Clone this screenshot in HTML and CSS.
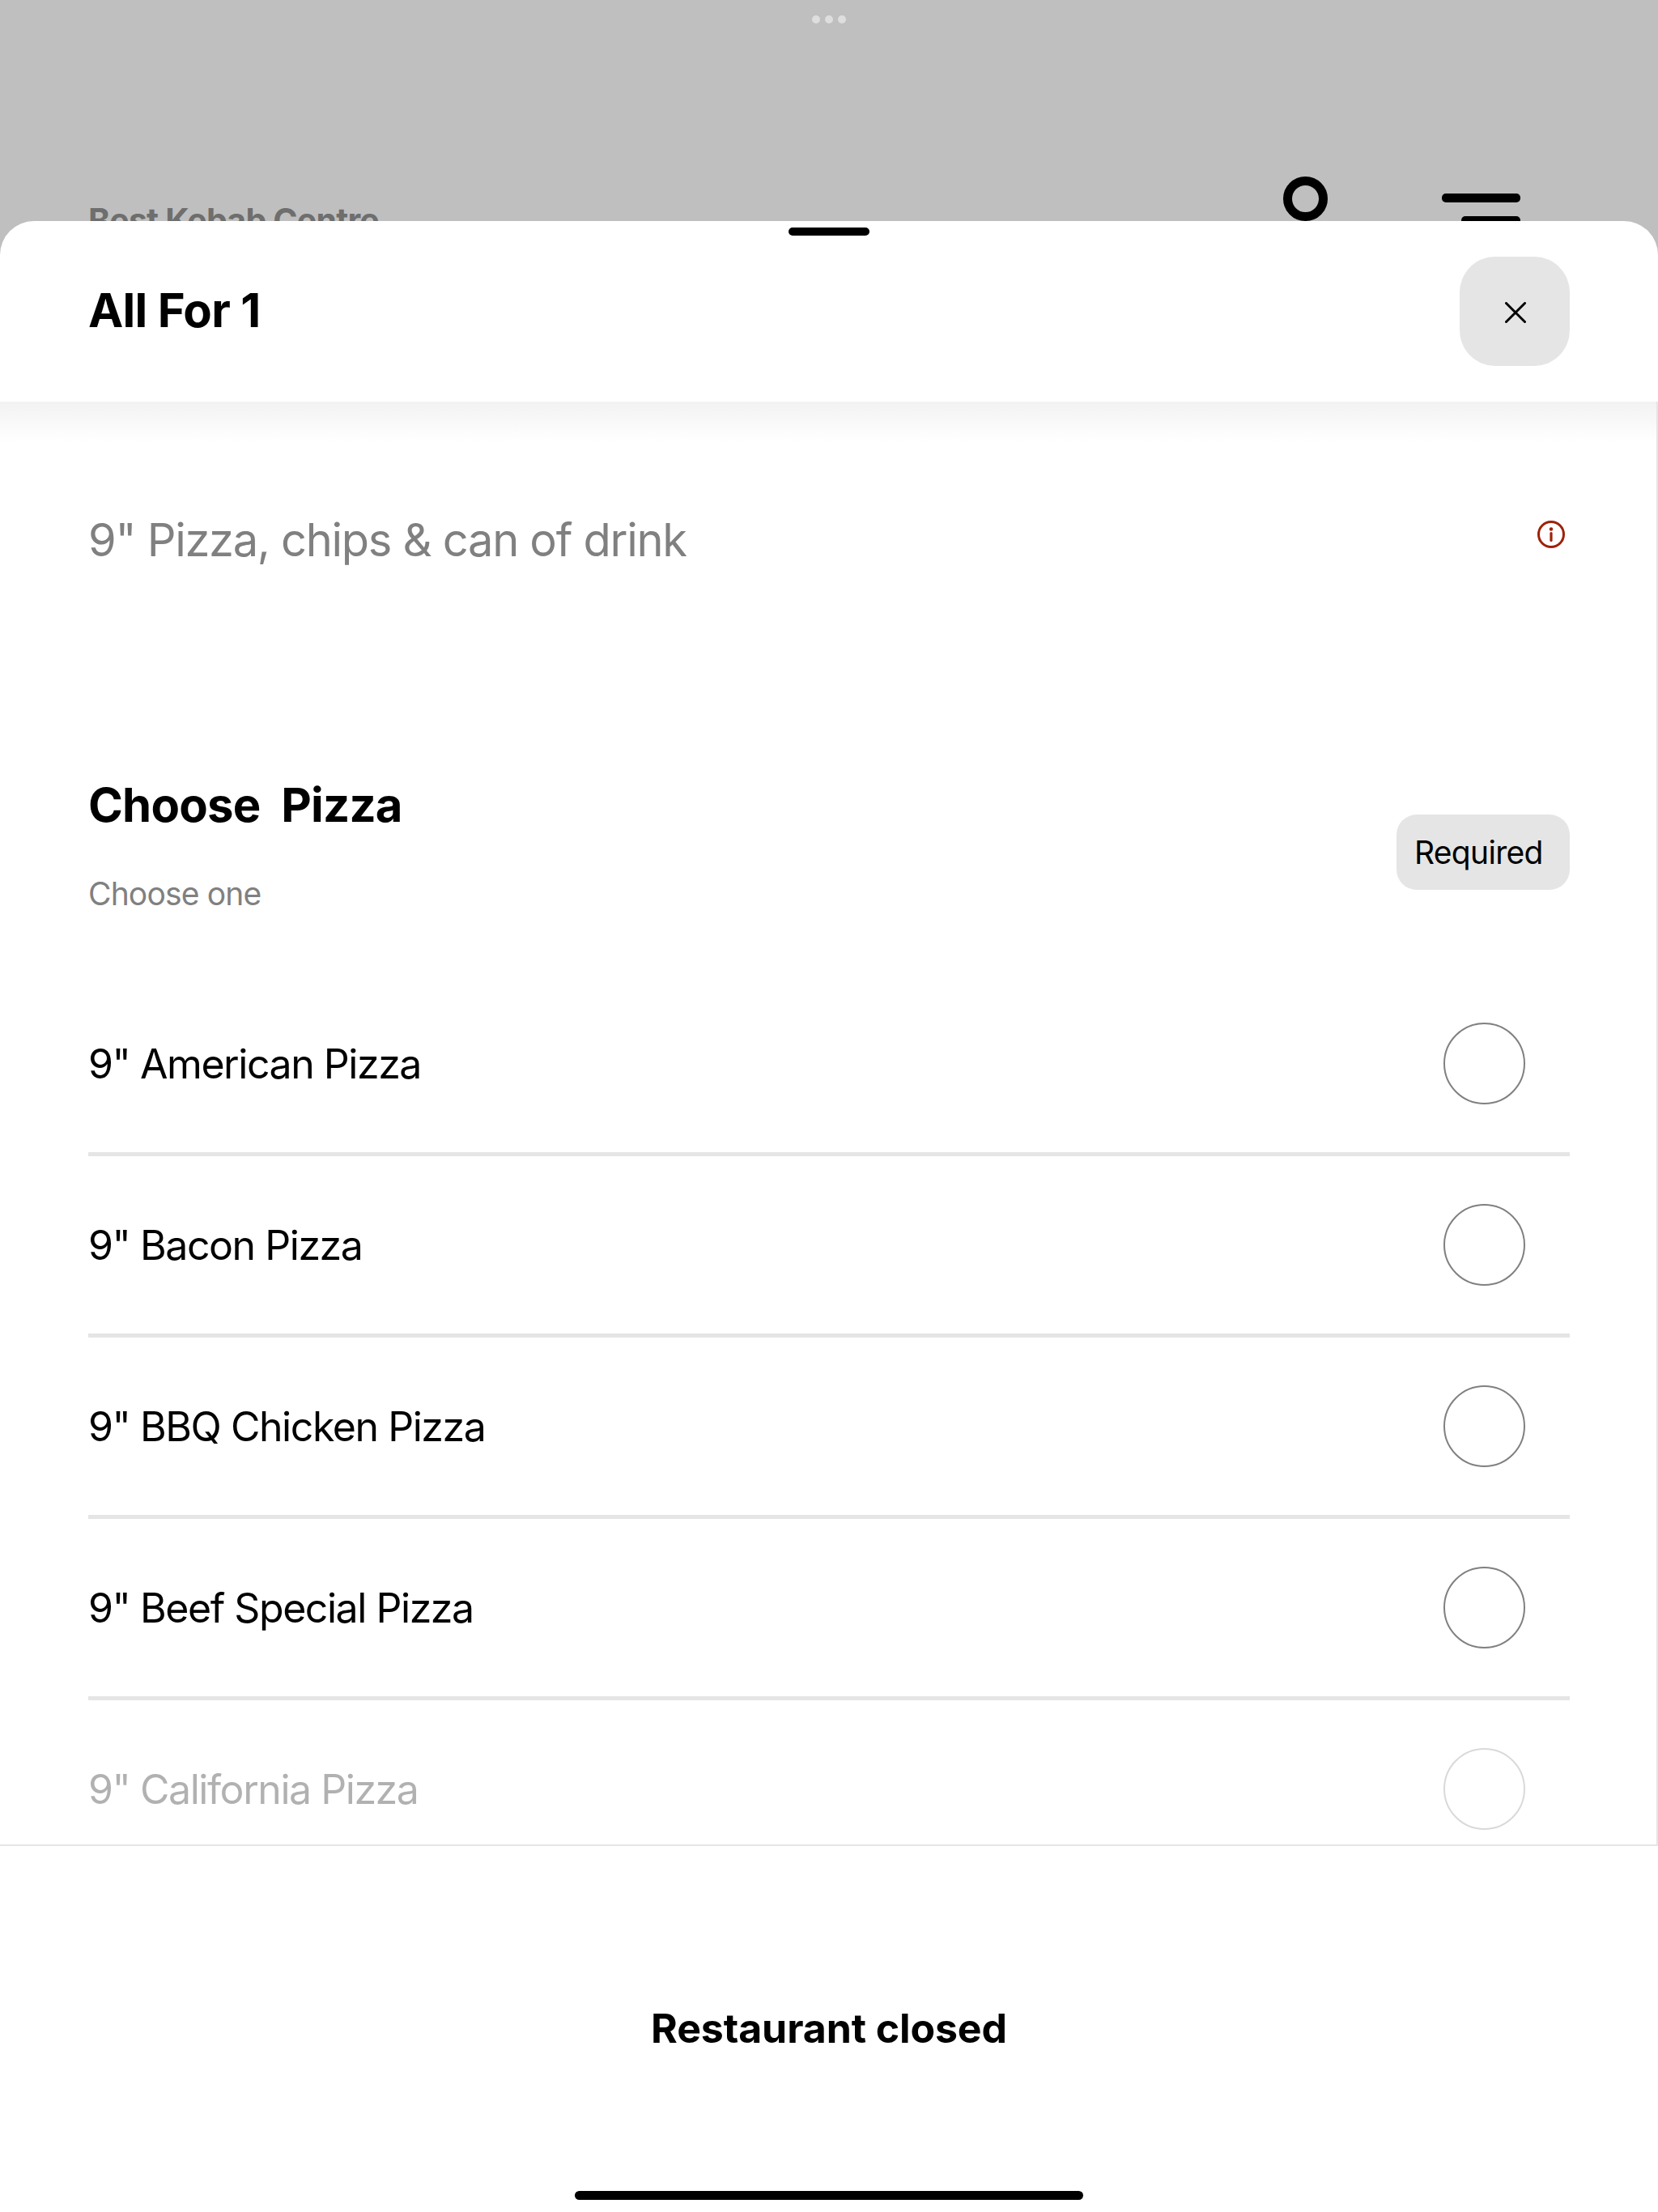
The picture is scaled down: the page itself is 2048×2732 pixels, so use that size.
FILE: index.html
```html
<!DOCTYPE html>
<html lang="en">
<head>
    <meta charset="UTF-8">
    <meta name="viewport" content="width=device-width, initial-scale=1.0">
    <title>All For 1</title>
    <link rel="stylesheet" href="styles.css">
</head>
<body>
    <!-- Page behind the sheet -->
    <div class="backdrop">
        <div class="top-dots"><span></span><span></span><span></span></div>
        <div class="restaurant-bar">
            <div class="restaurant-name">Best Kebab Centre</div>
            <div class="search-icon"></div>
            <div class="menu-icon"><span class="bar-long"></span><span class="bar-short"></span></div>
        </div>
    </div>

    <div class="sheet">
        <div class="handle"></div>
        <div class="sheet-header">
            <h1>All For 1</h1>
            <button class="close-btn" aria-label="Close">
                <svg width="26" height="26" viewBox="0 0 26 26">
                    <path d="M1.5 1.5L24.5 24.5M24.5 1.5L1.5 24.5" stroke="#000" stroke-width="3" stroke-linecap="round"/>
                </svg>
            </button>
        </div>

        <div class="sheet-body">
            <div class="header-shade"></div>

            <div class="description">
                <p>9" Pizza, chips &amp; can of drink</p>
                <svg class="info-icon" width="34" height="34" viewBox="0 0 34 34">
                    <circle cx="17" cy="17" r="15.5" fill="none" stroke="#9e2109" stroke-width="3"/>
                    <circle cx="17" cy="10.5" r="2.2" fill="#9e2109"/>
                    <path d="M17 15.5V24.5" stroke="#9e2109" stroke-width="3.2" stroke-linecap="round"/>
                </svg>
            </div>

            <div class="group-head">
                <div>
                    <h2>Choose&nbsp; Pizza</h2>
                    <div class="group-hint">Choose one</div>
                </div>
                <div class="badge">Required</div>
            </div>

            <div class="option"><span>9" American Pizza</span><i class="radio"></i></div>
            <div class="option"><span>9" Bacon Pizza</span><i class="radio"></i></div>
            <div class="option"><span>9" BBQ Chicken Pizza</span><i class="radio"></i></div>
            <div class="option"><span>9" Beef Special Pizza</span><i class="radio"></i></div>
            <div class="option faded"><span>9" California Pizza</span><i class="radio"></i></div>
        </div>

        <div class="sheet-footer">
            <div class="closed-label">Restaurant closed</div>
            <div class="home-bar"></div>
        </div>
    </div>
</body>
</html>
```

FILE: styles.css
```css
/* Sheet over a dimmed page */

* {
    box-sizing: border-box;
}

body {
    margin: 0;
    height: 2732px;
    overflow: hidden;
    background-color: #bfbfbf;
    font-family: Inter, "Noto Sans", sans-serif;
    color: #000;
}

.backdrop {
    height: 273px;
    overflow: hidden;
}

.top-dots {
    display: flex;
    justify-content: center;
    gap: 6px;
    padding-top: 19px;
}

.top-dots span {
    width: 10px;
    height: 10px;
    border-radius: 50%;
    background-color: #dedede;
}

.restaurant-bar {
    display: flex;
    align-items: flex-start;
    padding: 189px 0 0 109px;
}

.restaurant-name {
    width: 1476px;
    font-size: 41px;
    font-weight: 700;
    line-height: 50px;
    margin-top: 29px;
    letter-spacing: -0.8px;
    color: #6e6e6e;
}

.search-icon {
    width: 55px;
    height: 55px;
    border: 11px solid #000;
    border-radius: 50%;
}

.menu-icon {
    display: flex;
    flex-direction: column;
    align-items: flex-end;
    gap: 17px;
    width: 97px;
    margin: 21px 0 0 141px;
}

.menu-icon span {
    height: 11px;
    border-radius: 5px;
    background-color: #000;
}

.bar-long {
    width: 97px;
}

.bar-short {
    width: 73px;
}

.sheet {
    height: 2459px;
    display: flex;
    flex-direction: column;
    background-color: #fff;
    border-radius: 42px 42px 0 0;
}

.handle {
    width: 100px;
    height: 10px;
    margin: 8px auto 0;
    border-radius: 5px;
    background-color: #000;
}

.sheet-header {
    height: 205px;
    display: flex;
    justify-content: space-between;
    align-items: center;
    padding: 0 109px 18px 109px;
}

h1 {
    margin: 0 0 3px;
    font-size: 58px;
    font-weight: 700;
    letter-spacing: -0.7px;
}

.close-btn {
    width: 136px;
    height: 135px;
    display: flex;
    align-items: center;
    justify-content: center;
    padding: 3px 0 0 2px;
    border: none;
    border-radius: 44px;
    background-color: #e5e5e5;
}

.sheet-body {
    height: 1782px;
    overflow: hidden;
    border-right: 2px solid #e5e5e5;
}

.header-shade {
    height: 49px;
    background: linear-gradient(#f2f2f2, #fff);
}

.description {
    height: 244px;
    display: flex;
    justify-content: space-between;
    align-items: center;
    padding: 0 113px 0 109px;
    font-size: 56px;
    color: #808080;
}

.description p {
    margin: 0;
    letter-spacing: -1.3px;
}

.info-icon {
    margin-top: -15px;
}

.group-head {
    height: 415px;
    display: flex;
    justify-content: space-between;
    align-items: flex-start;
    padding: 170px 107px 0 109px;
}

h2 {
    margin: 0 0 50px;
    font-size: 58px;
    font-weight: 700;
    line-height: 70px;
    letter-spacing: -0.8px;
}

.group-hint {
    font-size: 39px;
    line-height: 50px;
    letter-spacing: -0.85px;
    color: #808080;
}

.badge {
    width: 214px;
    height: 93px;
    margin-top: 47px;
    padding: 0 0 0 22px;
    border-radius: 25px;
    background-color: #e5e5e5;
    font-size: 39px;
    line-height: 93px;
    letter-spacing: -0.7px;
}

.option {
    height: 224px;
    margin: 0 107px 0 109px;
    display: flex;
    justify-content: space-between;
    align-items: center;
    border-bottom: 5px solid #e5e5e5;
    font-size: 50px;
    letter-spacing: -1.45px;
}

.radio {
    width: 101px;
    height: 101px;
    margin-right: 55px;
    border: 2px solid #808080;
    border-radius: 50%;
}

.faded {
    opacity: 0.3;
}

.sheet-footer {
    flex: 1;
    display: flex;
    flex-direction: column;
    align-items: center;
    border-top: 2px solid #e5e5e5;
}

.closed-label {
    margin-top: 195px;
    font-size: 50px;
    font-weight: 700;
    line-height: 60px;
    letter-spacing: -0.1px;
}

.home-bar {
    width: 628px;
    height: 11px;
    margin-top: 171px;
    border-radius: 6px;
    background-color: #000;
}
```
